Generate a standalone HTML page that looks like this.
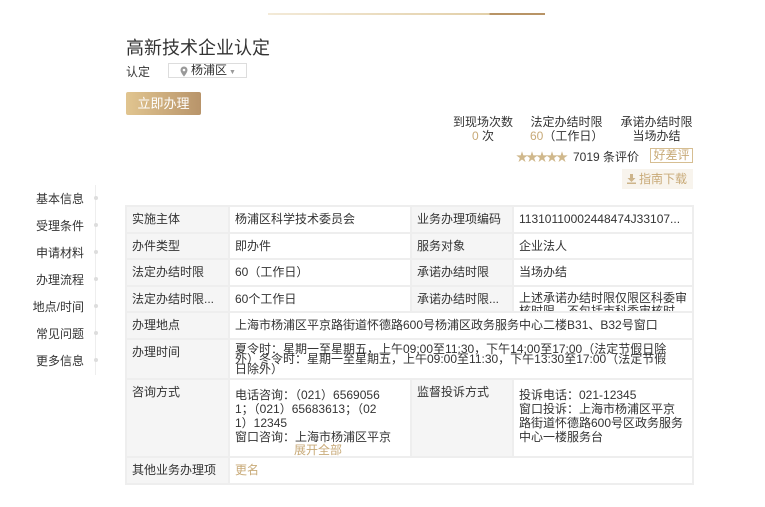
<!DOCTYPE html>
<html><head><meta charset="utf-8"><style>
*{margin:0;padding:0;box-sizing:border-box}
body{width:765px;height:507px;background:#fff;font-family:"Liberation Sans","Noto Sans CJK SC",sans-serif;font-size:12px;color:#333;position:relative;overflow:hidden}
.a{position:absolute;white-space:nowrap}
.nav{position:absolute;right:681px;font-size:12px;color:#333}
.dot{position:absolute;left:94px;width:4px;height:4px;border-radius:50%;background:#ddd}
table{position:absolute;left:125px;top:205px;width:567px;border-collapse:collapse;table-layout:fixed}
td{border:2px solid #eee;padding:0 5px;vertical-align:middle;font-size:12px;line-height:13px;overflow:hidden}
td.l{background:#f5f5f5}
.g{color:#c8aa78}
</style></head><body>
<div class="a" style="left:268px;top:13px;width:277px;height:2px;background:linear-gradient(90deg,#f3ead8,#e2cfa8 80%,#b89466 80%,#b89466)"></div>
<div class="a" style="left:126px;top:34px;font-size:18px;color:#333">高新技术企业认定</div>
<div class="a" style="left:126px;top:63px;font-size:12px">认定</div>
<div class="a" style="left:168px;top:63px;width:79px;height:15px;border:1px solid #ddd;font-size:12px;line-height:13px;padding-left:22px">杨浦区<span style="font-size:7px;color:#999;margin-left:2px">▼</span>
<svg style="position:absolute;left:11px;top:2px" width="8" height="11" viewBox="0 0 8 11"><path d="M4 0.5a3.5 3.5 0 0 0-3.5 3.5c0 2.5 3.5 6.5 3.5 6.5s3.5-4 3.5-6.5A3.5 3.5 0 0 0 4 0.5z" fill="#999"/><circle cx="4" cy="4" r="1.3" fill="#fff"/></svg></div>
<div class="a" style="left:126px;top:92px;width:75px;height:23px;border-radius:2px;background:linear-gradient(90deg,#e1c590,#b8946a);color:#fff;font-size:13px;line-height:23px;text-align:center">立即办理</div>
<div class="a" style="left:452px;top:115px;text-align:center;width:62px;line-height:14px">到现场次数<br><span class="g">0</span> 次</div>
<div class="a" style="left:530px;top:115px;text-align:center;width:73px;line-height:14px">法定办结时限<br><span class="g">60</span>（工作日）</div>
<div class="a" style="left:619px;top:115px;text-align:center;width:75px;line-height:14px">承诺办结时限<br>当场办结</div>
<div class="a" style="left:516px;top:148px;color:#d0b88c;font-size:12px;letter-spacing:-2px">★★★★★</div>
<div class="a" style="left:573px;top:148px">7019 条评价</div>
<div class="a" style="left:650px;top:148px;width:43px;height:15px;border:1px solid #d6be92;color:#c8aa78;line-height:13px;text-align:center">好差评</div>
<div class="a" style="left:622px;top:169px;width:71px;height:20px;background:#f8f4ed;color:#c8aa78;line-height:20px;font-size:12px;padding-left:17px">指南下载
<svg style="position:absolute;left:5px;top:5px" width="9" height="10" viewBox="0 0 9 10"><path d="M3 0h3v4h2.5L4.5 8 0.5 4H3z" fill="#cdb48a"/><rect x="0" y="8.5" width="9" height="1.5" fill="#cdb48a"/></svg></div>
<div class="a" style="left:95px;top:185px;width:1px;height:190px;background:#eee"></div>
<div class="nav" style="top:190px">基本信息</div><div class="dot" style="top:196px"></div>
<div class="nav" style="top:217px">受理条件</div><div class="dot" style="top:223px"></div>
<div class="nav" style="top:244px">申请材料</div><div class="dot" style="top:250px"></div>
<div class="nav" style="top:271px">办理流程</div><div class="dot" style="top:277px"></div>
<div class="nav" style="top:298px">地点/时间</div><div class="dot" style="top:304px"></div>
<div class="nav" style="top:325px">常见问题</div><div class="dot" style="top:331px"></div>
<div class="nav" style="top:352px">更多信息</div><div class="dot" style="top:358px"></div>
<table>
<colgroup><col style="width:103px"><col style="width:182px"><col style="width:102px"><col style="width:180px"></colgroup>
<tr style="height:27px"><td class="l">实施主体</td><td>杨浦区科学技术委员会</td><td class="l">业务办理项编码</td><td style="white-space:nowrap">11310110002448474J33107...</td></tr>
<tr style="height:26px"><td class="l">办件类型</td><td>即办件</td><td class="l">服务对象</td><td>企业法人</td></tr>
<tr style="height:27px"><td class="l">法定办结时限</td><td>60（工作日）</td><td class="l">承诺办结时限</td><td>当场办结</td></tr>
<tr style="height:26px"><td class="l" style="white-space:nowrap">法定办结时限...</td><td>60个工作日</td><td class="l" style="white-space:nowrap">承诺办结时限...</td><td><div style="height:24px;overflow:hidden;padding-top:5px">上述承诺办结时限仅限区科委审核时限，不包括市科委审核时</div></td></tr>
<tr style="height:27px"><td class="l">办理地点</td><td colspan="3">上海市杨浦区平京路街道怀德路600号杨浦区政务服务中心二楼B31、B32号窗口</td></tr>
<tr style="height:40px"><td class="l" style="vertical-align:top;padding-top:6px">办理时间</td><td colspan="3" style="line-height:10px;white-space:nowrap">夏令时：星期一至星期五，上午09:00至11:30，下午14:00至17:00（法定节假日除<br>外）冬令时：星期一至星期五，上午09:00至11:30，下午13:30至17:00（法定节假<br>日除外）</td></tr>
<tr style="height:78px"><td class="l" style="vertical-align:top;padding-top:6px">咨询方式</td><td style="vertical-align:top;padding-top:8px;position:relative"><div style="height:56px;overflow:hidden;line-height:14px;white-space:nowrap">电话咨询：（021）6569056<br>1；（021）65683613；（02<br>1）12345<br>窗口咨询：上海市杨浦区平京</div><div class="g" style="position:absolute;left:64px;top:64px">展开全部</div></td><td class="l" style="vertical-align:top;padding-top:6px">监督投诉方式</td><td style="vertical-align:top;padding-top:8px;line-height:14px;white-space:nowrap">投诉电话：021-12345<br>窗口投诉：上海市杨浦区平京<br>路街道怀德路600号区政务服务<br>中心一楼服务台</td></tr>
<tr style="height:27px"><td class="l">其他业务办理项</td><td colspan="3" class="g">更名</td></tr>
</table>
</body></html>
